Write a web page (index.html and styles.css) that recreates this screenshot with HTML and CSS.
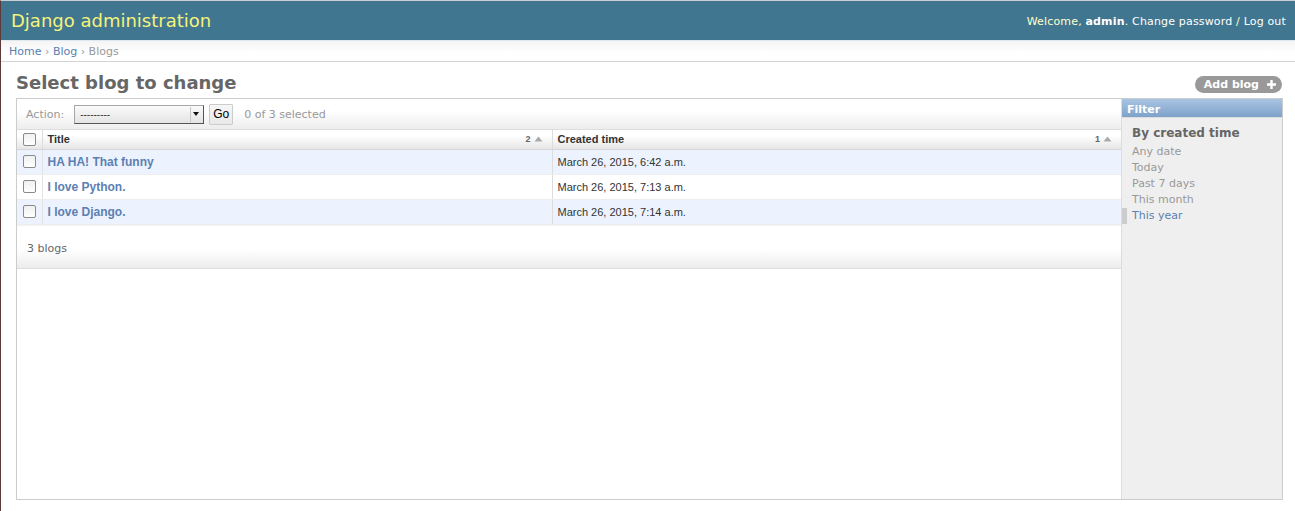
FILE: index.html
```html
<!DOCTYPE html>
<html lang="en">
<head>
<meta charset="utf-8">
<title>Select blog to change | Django site admin</title>
<link rel="stylesheet" href="styles.css">
</head>
<body>
<div class="page">
  <header class="header">
    <h1 class="branding">Django administration</h1>
    <div class="user-tools">Welcome, <strong>admin</strong>. <a href="#">Change password</a> / <a href="#">Log out</a></div>
  </header>
  <nav class="breadcrumbs"><a href="#">Home</a> › <a href="#">Blog</a> › Blogs</nav>
  <main class="content">
    <div class="title-row">
      <h1 class="page-title">Select blog to change</h1>
      <a class="addlink" href="#">Add blog
        <svg class="plus" width="11" height="11" viewBox="0 0 11 11"><path d="M5.5 1v9M1 5.5h9" stroke="#fff" stroke-width="2.4" fill="none"/></svg>
      </a>
    </div>
    <div class="module">
      <div class="main-col">
        <div class="actions">
          <label class="action-label">Action:</label>
          <span class="select-wrap"><select class="action-select"><option>---------</option></select></span>
          <button class="go-btn" type="button">Go</button>
          <span class="counter">0 of 3 selected</span>
        </div>
        <table class="results">
          <thead>
            <tr>
              <th class="cb-col"><input type="checkbox" class="cb"></th>
              <th class="col-title"><div class="th-inner"><span>Title</span><span class="sortopt">2 <svg width="9" height="6" viewBox="0 0 9 6"><path d="M0.5 5.5L4.5 0.5L8.5 5.5Z" fill="#aaa"/></svg></span></div></th>
              <th class="col-time"><div class="th-inner"><span>Created time</span><span class="sortopt">1 <svg width="9" height="6" viewBox="0 0 9 6"><path d="M0.5 5.5L4.5 0.5L8.5 5.5Z" fill="#aaa"/></svg></span></div></th>
            </tr>
          </thead>
          <tbody>
            <tr class="row1">
              <td class="cb-col"><input type="checkbox" class="cb"></td>
              <th class="name"><a href="#">HA HA! That funny</a></th>
              <td class="time">March 26, 2015, 6:42 a.m.</td>
            </tr>
            <tr class="row2">
              <td class="cb-col"><input type="checkbox" class="cb"></td>
              <th class="name"><a href="#">I love Python.</a></th>
              <td class="time">March 26, 2015, 7:13 a.m.</td>
            </tr>
            <tr class="row1">
              <td class="cb-col"><input type="checkbox" class="cb"></td>
              <th class="name"><a href="#">I love Django.</a></th>
              <td class="time">March 26, 2015, 7:14 a.m.</td>
            </tr>
          </tbody>
        </table>
        <p class="paginator">3 blogs</p>
      </div>
      <aside class="filter">
        <h2 class="filter-title">Filter</h2>
        <h3 class="filter-head">By created time</h3>
        <ul class="filter-list">
          <li><a href="#">Any date</a></li>
          <li><a href="#">Today</a></li>
          <li><a href="#">Past 7 days</a></li>
          <li><a href="#">This month</a></li>
          <li class="selected"><a href="#">This year</a></li>
        </ul>
      </aside>
    </div>
  </main>
</div>
</body>
</html>
```
FILE: styles.css
```css
* { box-sizing: border-box; }
html, body { margin: 0; padding: 0; }
body {
  font-family: "DejaVu Sans", "Liberation Sans", sans-serif;
  font-size: 12px;
  color: #333;
  background: #fff;
  border-left: 1px solid #5c3a3a;
  border-top: 1px solid #c9cfd3;
  height: 511px;
  overflow: hidden;
}
a { color: #5b80b2; text-decoration: none; }

.header {
  height: 39px;
  background: #417690;
  color: #ffc;
  display: flex;
  align-items: center;
  justify-content: space-between;
  padding: 0 9px 0 10px;
}
.branding {
  margin: 0;
  font-size: 18px;
  font-weight: normal;
  color: #f4f379;
  padding-top: 0;
}
.user-tools {
  font-size: 11px;
  letter-spacing: 0.17px;
  color: #ffc;
  padding-top: 1px;
}
.user-tools strong { color: #fff; }
.user-tools a { color: #fff; }

.breadcrumbs {
  height: 22px;
  border-top: 1px solid #dfe9f0;
  border-bottom: 1px solid #d4d4d4;
  background: linear-gradient(#f4f4f4, #fff 60%);
  padding: 4px 8px 0 8px;
  font-size: 11px;
  color: #999;
}

.content {
  margin: 10px 12px 0 15px;
}
.title-row {
  display: flex;
  justify-content: space-between;
  align-items: center;
  height: 21px;
  margin-bottom: 5px;
}
.page-title {
  margin: 0;
  font-size: 18px;
  font-weight: bold;
  color: #666;
  line-height: 21px;
}
.addlink {
  display: flex;
  align-items: center;
  gap: 7px;
  height: 17px;
  margin-top: 3px;
  padding: 0 5px 0 9px;
  background: #999;
  border-radius: 9px;
  color: #fff;
  font-size: 11px;
  font-weight: bold;
  margin-right: 1px;
}
.plus { display: block; }

.module {
  display: flex;
  border: 1px solid #ccc;
  min-height: 402px;
}
.main-col {
  flex: 1;
  min-width: 0;
  border-right: 1px solid #ddd;
}

.actions {
  height: 31px;
  display: flex;
  align-items: center;
  padding: 0 0 0 9px;
  border-bottom: 1px solid #ddd;
  background: linear-gradient(#fff 40%, #ededed);
  font-size: 11px;
  color: #999;
}
.action-label { margin-right: 10px; }
.select-wrap {
  position: relative;
  display: inline-block;
  width: 130px;
  height: 19px;
}
.action-select {
  -webkit-appearance: none;
  appearance: none;
  width: 130px;
  height: 19px;
  border: 1px solid #a6a6a6;
  border-right-color: #555;
  border-bottom-color: #555;
  background: linear-gradient(#fafafa, #e4e4e4);
  font-family: "Liberation Sans", sans-serif;
  font-size: 10px;
  color: #333;
  padding: 0 0 0 5px;
  border-radius: 0;
}
.select-wrap::after {
  content: "";
  position: absolute;
  right: 5px;
  top: 7px;
  border-left: 3px solid transparent;
  border-right: 3px solid transparent;
  border-top: 4px solid #111;
}
.select-wrap::before {
  content: "";
  position: absolute;
  right: 13px;
  top: 2px;
  bottom: 2px;
  width: 1px;
  background: #c8c8c8;
}
.go-btn {
  margin-left: 5px;
  width: 24px;
  height: 21px;
  border: 1px solid #ccc;
  background: linear-gradient(#f6f6f6, #e9e9e9);
  font-family: "Liberation Sans", sans-serif;
  font-size: 12px;
  color: #000;
  padding: 0;
  border-radius: 1px;
}
.counter { margin-left: 11px; }

.results {
  width: 100%;
  border-collapse: collapse;
  font-family: "Liberation Sans", sans-serif;
  font-size: 11px;
}
.results thead th {
  height: 19px;
  padding: 0 9px 1px 5px;
  text-align: left;
  font-weight: bold;
  color: #333;
  background: linear-gradient(#fff, #fff 30%, #e6e6e6);
  border-bottom: 1px solid #d6d6d6;
  border-left: 1px solid #ddd;
  vertical-align: middle;
}
.results thead tr { height: 19px; }
.results thead th.cb-col { border-left: none; }
.th-inner {
  display: flex;
  justify-content: space-between;
  align-items: center;
  height: 17px;
}
.sortopt {
  font-size: 9px;
  color: #666;
  display: flex;
  align-items: center;
  gap: 3px;
}
.results .cb-col {
  width: 25px;
  padding: 0 0 0 6px;
  text-align: left;
  vertical-align: middle;
}
.results tbody td.cb-col { border-right: 1px solid #e2e2e2; }
.col-title { width: 510px; }
.results tbody td,
.results tbody th {
  height: 25px;
  border-bottom: 1px solid #eee;
  vertical-align: middle;
  text-align: left;
}
.results tbody th.name {
  padding: 0 5px;
  font-size: 12px;
  font-weight: bold;
}
.results tbody td.time {
  padding: 0 5px;
  color: #333;
  border-left: 1px solid #ddd;
}
.row1 { background: #edf3fe; }
.row2 { background: #fff; }

.cb {
  margin: 0;
  width: 13px;
  height: 13px;
  display: block;
  -webkit-appearance: none;
  appearance: none;
  border: 1px solid #8a8a8a;
  border-radius: 2px;
  background: linear-gradient(#f0f0f0, #fff);
}

.paginator {
  margin: 0;
  height: 44px;
  line-height: 44px;
  padding: 1px 0 0 10px;
  font-size: 11px;
  color: #666;
  border-top: 1px solid #f2f2f2;
  border-bottom: 1px solid #ddd;
  background: linear-gradient(#fff 55%, #ececec);
}

.filter {
  width: 160px;
  flex: none;
  background: #efefef;
  color: #666;
}
.filter-title {
  margin: 0;
  height: 19px;
  line-height: 19px;
  padding: 1px 5px 0;
  font-size: 11px;
  font-weight: bold;
  color: #fff;
  background: linear-gradient(#a9c4e2, #7ea2c9);
  border-bottom: 1px solid #ddd;
}
.filter-head {
  margin: 8px 0 4px 10px;
  font-size: 12px;
  font-weight: bold;
  color: #666;
}
.filter-list {
  list-style: none;
  margin: 0;
  padding: 0;
  font-size: 11px;
}
.filter-list li {
  line-height: 16px;
  padding-left: 10px;
}
.filter-list a { color: #999; }
.filter-list li.selected {
  border-left: 5px solid #ccc;
  padding-left: 5px;
}
.filter-list li.selected a { color: #5b80b2; }
```
